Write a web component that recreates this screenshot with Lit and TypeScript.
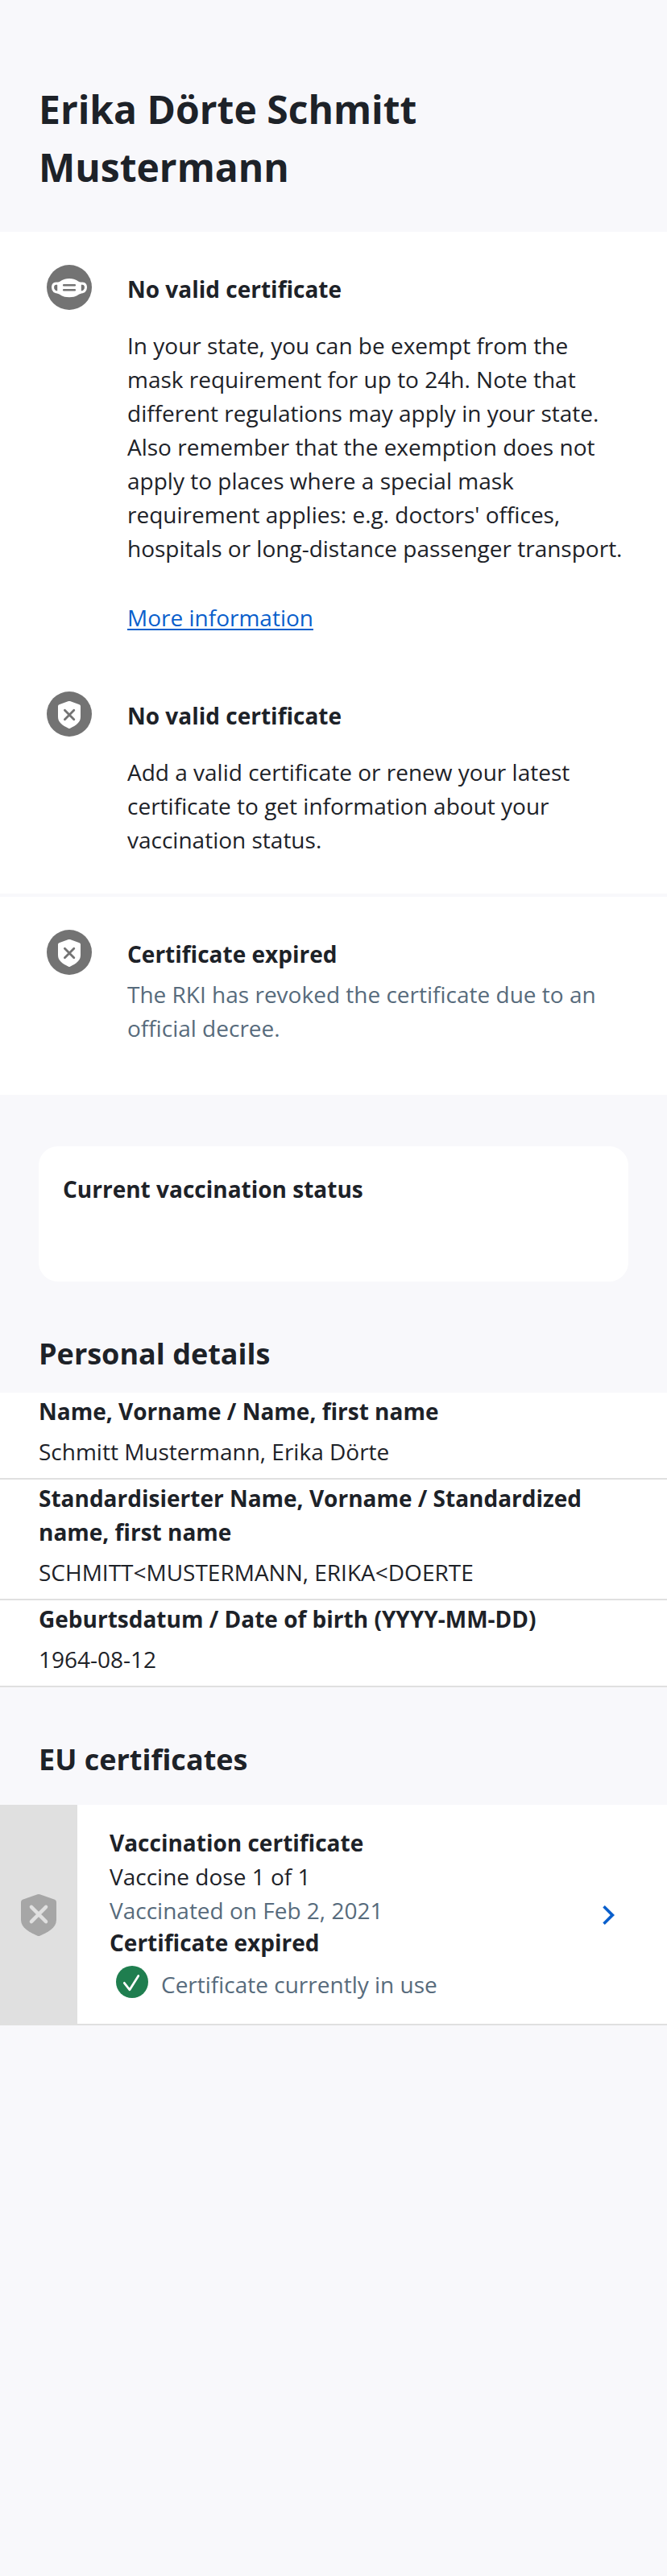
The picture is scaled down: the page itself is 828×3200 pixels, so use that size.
import { LitElement, html, css } from "lit";
import { customElement } from "lit/decorators.js";

const maskIcon = html`<svg class="badge" viewBox="0 0 56 56">
  <circle cx="28" cy="28" r="28" fill="#737373" />
  <path d="M15 23.6 C11 22.4 7.6 23.2 7.6 28 C7.6 32.6 11 34.2 15.4 34.2 M41 23.6 C45 22.4 48.4 23.2 48.4 28 C48.4 32.6 45 34.2 40.6 34.2" fill="none" stroke="#fff" stroke-width="3.2" />
  <path d="M13.2 21.8 C17 21.6 19 17 28 17 C37 17 39 21.6 42.8 21.8 V35.4 C39.6 36 37 40.2 28 40.2 C19 40.2 16.4 36 13.2 35.4 Z" fill="#fff" />
  <path d="M13 24.8 V32.2 C10.4 31.8 9.4 30 9.4 28 C9.4 26 10.2 24.8 13 24.8 Z M43 24.8 V32.2 C45.6 31.8 46.6 30 46.6 28 C46.6 26 45.8 24.8 43 24.8 Z" fill="#737373" />
  <path d="M21.2 25.3 H34.8 M21.2 31.3 H34.8" stroke="#737373" stroke-width="2.6" stroke-linecap="round" />
</svg>`;

const shieldIcon = html`<svg class="badge" viewBox="0 0 56 56">
  <circle cx="28" cy="28" r="28" fill="#737373" />
  <path d="M27 12.1 Q28 11.7 29 12.1 L40.6 16.2 Q42 16.700 42 18.2 V31.500 C42 38.500 36.500 42 29 45.700 Q28 46.200 27 45.700 C19.500 42 14 38.500 14 31.500 V18.2 Q14 16.700 15.400 16.2 Z" fill="#fff" />
  <path d="M22.400 23.300 L33.800 34.700 M33.800 23.300 L22.400 34.700" stroke="#737373" stroke-width="2.800" stroke-linecap="round" />
</svg>`;

const greyShield = html`<svg class="shield" viewBox="0 0 44 52">
  <path d="M20.500 0.300 Q22 -0.200 23.500 0.300 L42 6.800 Q44 7.600 44 10 V32 C44 42 33 47.500 23.500 51.700 Q22 52.300 20.500 51.700 C11 47.500 0 42 0 32 V10 Q0 7.600 2 6.800 Z" fill="#a6a6a6" />
  <path d="M12.900 15.900 L31.100 34.100 M31.100 15.900 L12.900 34.100" stroke="#e0e0e0" stroke-width="4.400" stroke-linecap="round" />
</svg>`;

const checkIcon = html`<svg class="check" viewBox="0 0 40 40">
  <circle cx="20" cy="20" r="20" fill="#1f7e4f" />
  <path d="M10.300 21.300 L17 29.800 L27.800 12.500" fill="none" stroke="#fff" stroke-width="2.700" stroke-linecap="round" stroke-linejoin="round" />
</svg>`;

const chevron = html`<svg class="chevron" viewBox="0 0 16 24">
  <path d="M0.300 2.500 L2.800 0 L15 12 L2.800 24 L0.300 21.500 L9.700 12 Z" fill="#0a5fcc" />
</svg>`;

const details = [
  ["Name, Vorname / Name, first name", "Schmitt Mustermann, Erika Dörte"],
  ["Standardisierter Name, Vorname / Standardized name, first name", "SCHMITT<MUSTERMANN, ERIKA<DOERTE"],
  ["Geburtsdatum / Date of birth (YYYY-MM-DD)", "1964-08-12"],
];

@customElement("app-root")
export class AppRoot extends LitElement {
  static styles = css`
    :host {
      display: block;
      min-height: 3200px;
      background: #f8f8fb;
      color: #1d2228;
      font: 400 28px/42px "Open Sans", sans-serif;
    }
    * { box-sizing: border-box; margin: 0; }
    svg { display: block; flex: none; }
    h1 { padding: 100px 48px 44px; font-size: 48px; line-height: 72px; font-weight: 700; }
    h2 { font-size: 36px; line-height: 49px; font-weight: 700; padding: 0 48px; }
    .bold { font-weight: 700; }
    .muted { color: #576b7c; }
    .panel { background: #fff; }
    .status { display: flex; gap: 44px; padding-left: 58px; padding-right: 48px; }
    .badge { width: 56px; height: 56px; }
    .status .text { padding-top: 9px; }
    .mask { padding-top: 41px; }
    .vaccination { padding-top: 71px; padding-bottom: 46px; }
    .expired { padding-top: 41px; padding-bottom: 62px; }
    .revoked { margin-top: 8px; }
    .gap-top { margin-top: 28px; }
    .link { display: inline-block; margin-top: 44px; color: #0a5fcc; text-decoration: underline; text-underline-offset: 3px; text-decoration-thickness: 2px; text-decoration-skip-ink: none; }
    .divider { height: 4px; }
    .card { margin: 64px 48px 65px; height: 168px; border-radius: 24px; padding: 32px 30px; background: #fff; }
    .personal { padding-bottom: 24px; }
    .row { padding: 2px 48px 12px; border-bottom: 2px solid #e0e0e0; background: #fff; }
    .row:last-of-type { padding-bottom: 12px; }
    .row .value { margin-top: 8px; }
    .details { display: flex; flex-direction: column; }
    .eu { padding-top: 65px; padding-bottom: 32px; }
    .cert { display: flex; height: 274px; background: #fff; }
    .side { width: 96px; background: #e0e0e0; display: flex; align-items: center; justify-content: center; }
    .shield { width: 44px; height: 52px; }
    .body { flex: 1; display: flex; align-items: center; padding: 0 64px 0 40px; border-bottom: 2px solid #e0e0e0; }
    .info { flex: 1; align-self: stretch; padding-top: 26px; }
    .state { line-height: 38px; }
    .use { display: flex; gap: 16px; padding-left: 8px; }
    .check { width: 40px; height: 40px; margin-top: 10px; }
    .use span { padding-top: 12px; }
    .chevron { width: 16px; height: 24px; margin-top: 2px; }
  `;

  render() {
    return html`
      <h1>Erika Dörte Schmitt Mustermann</h1>
      <section class="panel">
        <div class="status mask">
          ${maskIcon}
          <div class="text">
            <p class="bold">No valid certificate</p>
            <p class="gap-top">In your state, you can be exempt from the mask requirement for up to 24h. Note that different regulations may apply in your state. Also remember that the exemption does not apply to places where a special mask requirement applies: e.g. doctors' offices, hospitals or long-distance passenger transport.</p>
            <a class="link">More information</a>
          </div>
        </div>
        <div class="status vaccination">
          ${shieldIcon}
          <div class="text">
            <p class="bold">No valid certificate</p>
            <p class="gap-top">Add a valid certificate or renew your latest certificate to get information about your vaccination status.</p>
          </div>
        </div>
      </section>
      <div class="divider"></div>
      <section class="panel status expired">
        ${shieldIcon}
        <div class="text">
          <p class="bold">Certificate expired</p>
          <p class="muted revoked">The RKI has revoked the certificate due to an official decree.</p>
        </div>
      </section>
      <section class="card"><p class="bold">Current vaccination status</p></section>
      <h2 class="personal">Personal details</h2>
      <div class="details">
        ${details.map(([label, value]) => html`<div class="row"><p class="bold">${label}</p><p class="value">${value}</p></div>`)}
      </div>
      <h2 class="eu">EU certificates</h2>
      <section class="cert">
        <div class="side">${greyShield}</div>
        <div class="body">
          <div class="info">
            <p class="bold">Vaccination certificate</p>
            <p>Vaccine dose 1 of 1</p>
            <p class="muted">Vaccinated on Feb 2, 2021</p>
            <p class="bold state">Certificate expired</p>
            <div class="use muted">${checkIcon}<span>Certificate currently in use</span></div>
          </div>
          ${chevron}
        </div>
      </section>
    `;
  }
}
